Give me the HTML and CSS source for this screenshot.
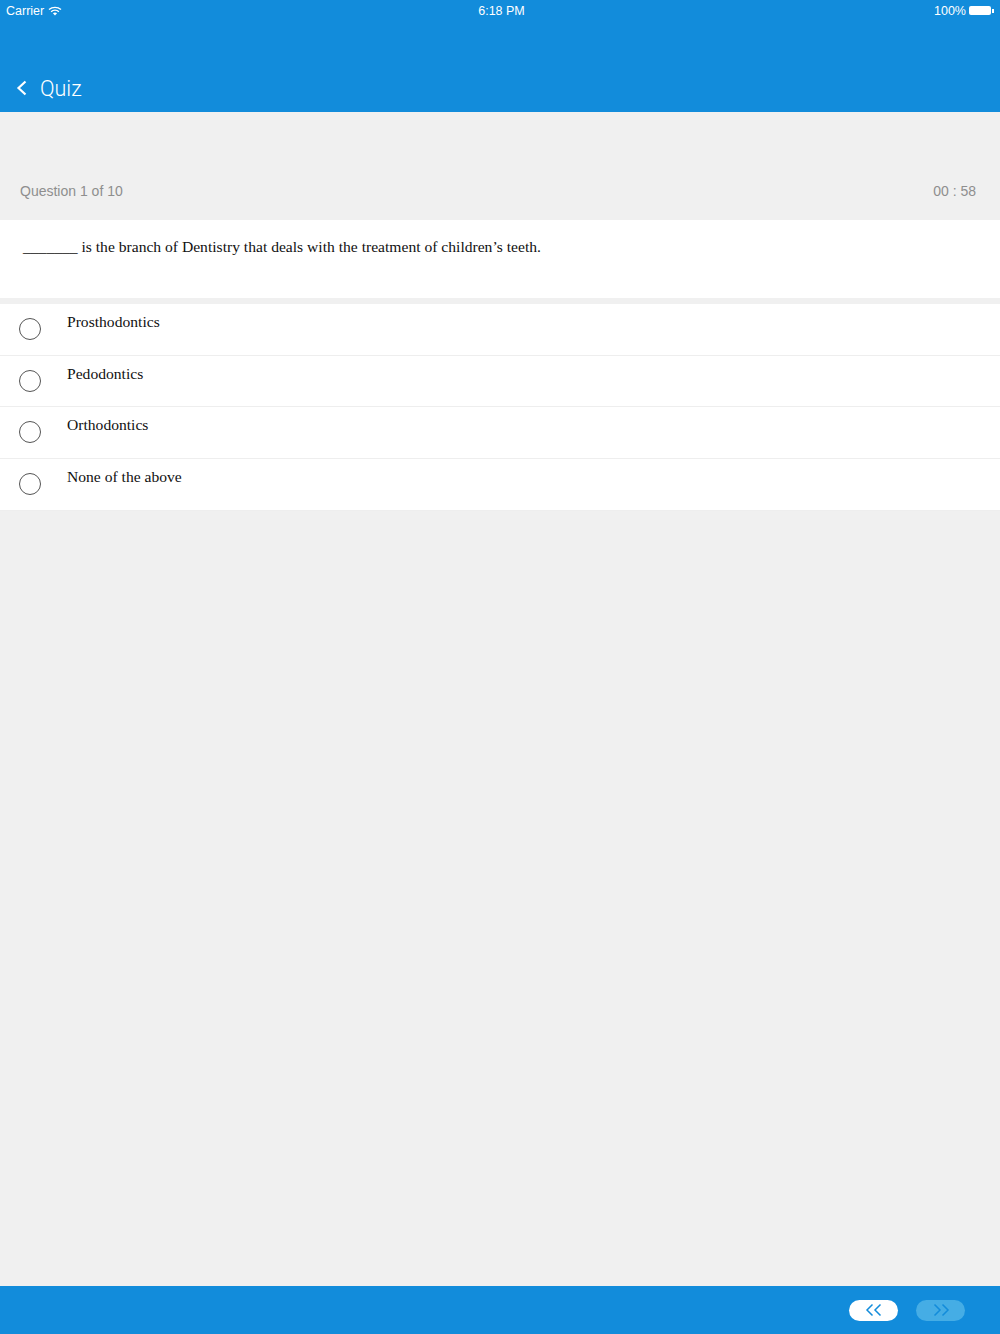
FILE: index.html
```html
<!DOCTYPE html>
<html lang="en">
<head>
    <meta charset="UTF-8">
    <meta name="viewport" content="width=device-width, initial-scale=1.0">
    <title>Quiz</title>
    <link rel="stylesheet" href="styles.css">
</head>
<body>

<div class="page">
    <div class="header">
        <div class="status">
            <div class="status-left">
                <span>Carrier</span>
                <svg class="wifi" width="14" height="10" viewBox="0 0 14 10">
                    <path d="M1 3.6C4.4 .6 9.6 .6 13 3.6" fill="none" stroke="#fff" stroke-width="1.4"/>
                    <path d="M3.1 5.7C5.3 3.8 8.7 3.8 10.9 5.7" fill="none" stroke="#fff" stroke-width="1.4"/>
                    <path d="M4.9 7.3C6.1 6.3 7.9 6.3 9.1 7.3L7 9.6Z" fill="#fff"/>
                </svg>
            </div>
            <div class="status-time">6:18 PM</div>
            <div class="status-right">
                <span>100%</span>
                <div class="battery"></div>
                <div class="battery-tip"></div>
            </div>
        </div>
        <div class="nav">
            <svg class="back" width="12" height="16" viewBox="0 0 12 16">
                <path d="M9.5 1.5L2.5 8l7 6.5" fill="none" stroke="#fff" stroke-width="2.2"/>
            </svg>
            <span class="nav-title">Quiz</span>
        </div>
    </div>

    <div class="info">
        <span>Question 1 of 10</span>
        <span>00 : 58</span>
    </div>

    <div class="question">_______ is the branch of Dentistry that deals with the treatment of children’s teeth.</div>

    <div class="options">
        <div class="option"><div class="radio"></div><div class="option-text">Prosthodontics</div></div>
        <div class="option"><div class="radio"></div><div class="option-text">Pedodontics</div></div>
        <div class="option"><div class="radio"></div><div class="option-text">Orthodontics</div></div>
        <div class="option"><div class="radio"></div><div class="option-text">None of the above</div></div>
    </div>

    <div class="spacer"></div>

    <div class="footer">
        <div class="pill">
            <svg width="18" height="14" viewBox="0 0 18 14">
                <path d="M7.500 1.500L2 7l5.500 5.500M15.500 1.500L10 7l5.500 5.500" fill="none" stroke="#128cdb" stroke-width="1.500"/>
            </svg>
        </div>
        <div class="pill pill-off">
            <svg width="18" height="14" viewBox="0 0 18 14">
                <path d="M2.500 1.500L8 7l-5.500 5.500M10.500 1.500L16 7l-5.500 5.500" fill="none" stroke="#128cdb" stroke-width="1.500"/>
            </svg>
        </div>
    </div>
</div>

</body>
</html>
```

FILE: styles.css
```css
* {
    box-sizing: border-box;
}
body {
    margin: 0;
    background-color: #f0f0f0;
    font-family: "Liberation Sans", Arial, sans-serif;
}
.page {
    display: flex;
    flex-direction: column;
    height: 1334px;
}
.header {
    background-color: #128cdb;
    color: white;
    height: 112px;
    padding: 0 6px;
}
.status {
    display: grid;
    grid-template-columns: 1fr auto 1fr;
    align-items: center;
    height: 21px;
    font-size: 12.5px;
}
.status-left {
    display: flex;
    align-items: center;
    gap: 4px;
}
.status-time {
    padding-left: 3px;
}
.status-right {
    display: flex;
    justify-content: flex-end;
    align-items: center;
}
.battery {
    width: 22px;
    height: 9px;
    margin-left: 3px;
    background-color: white;
    border-radius: 2px;
}
.battery-tip {
    width: 2px;
    height: 4px;
    margin-left: 1px;
    background-color: white;
}
.nav {
    display: flex;
    align-items: center;
    height: 30px;
    margin-top: 52px;
    padding-left: 10px;
}
.nav-title {
    font-family: Roboto, sans-serif;
    font-weight: 300;
    font-size: 21.5px;
    margin-left: 12px;
}
.info {
    display: flex;
    justify-content: space-between;
    align-items: flex-end;
    height: 108px;
    padding: 0 24px 21px 20px;
    color: #8e8e8e;
    font-size: 14px;
}
.question {
    background-color: white;
    height: 78px;
    padding: 17px 23px 0;
    font-family: "Liberation Serif", serif;
    font-size: 15.6px;
    line-height: 20px;
    color: #111;
}
.options {
    margin-top: 6px;
}
.option {
    display: flex;
    background-color: white;
    height: 51.67px;
    border-bottom: 1px solid #eeeeee;
}
.radio {
    width: 22px;
    height: 22px;
    margin: 14px 0 0 19px;
    border: 1.5px solid #555;
    border-radius: 50%;
}
.option-text {
    margin: 8px 0 0 26px;
    font-family: "Liberation Serif", serif;
    font-size: 15.6px;
    line-height: 20px;
    color: #111;
}
.spacer {
    flex: 1;
}
.footer {
    display: flex;
    justify-content: flex-end;
    align-items: center;
    gap: 18px;
    height: 48px;
    padding-right: 35px;
    background-color: #128cdb;
}
.pill {
    display: flex;
    justify-content: center;
    align-items: center;
    width: 49px;
    height: 21px;
    background-color: white;
    border-radius: 11px;
}
.pill-off {
    background-color: #45ade5;
}
```
